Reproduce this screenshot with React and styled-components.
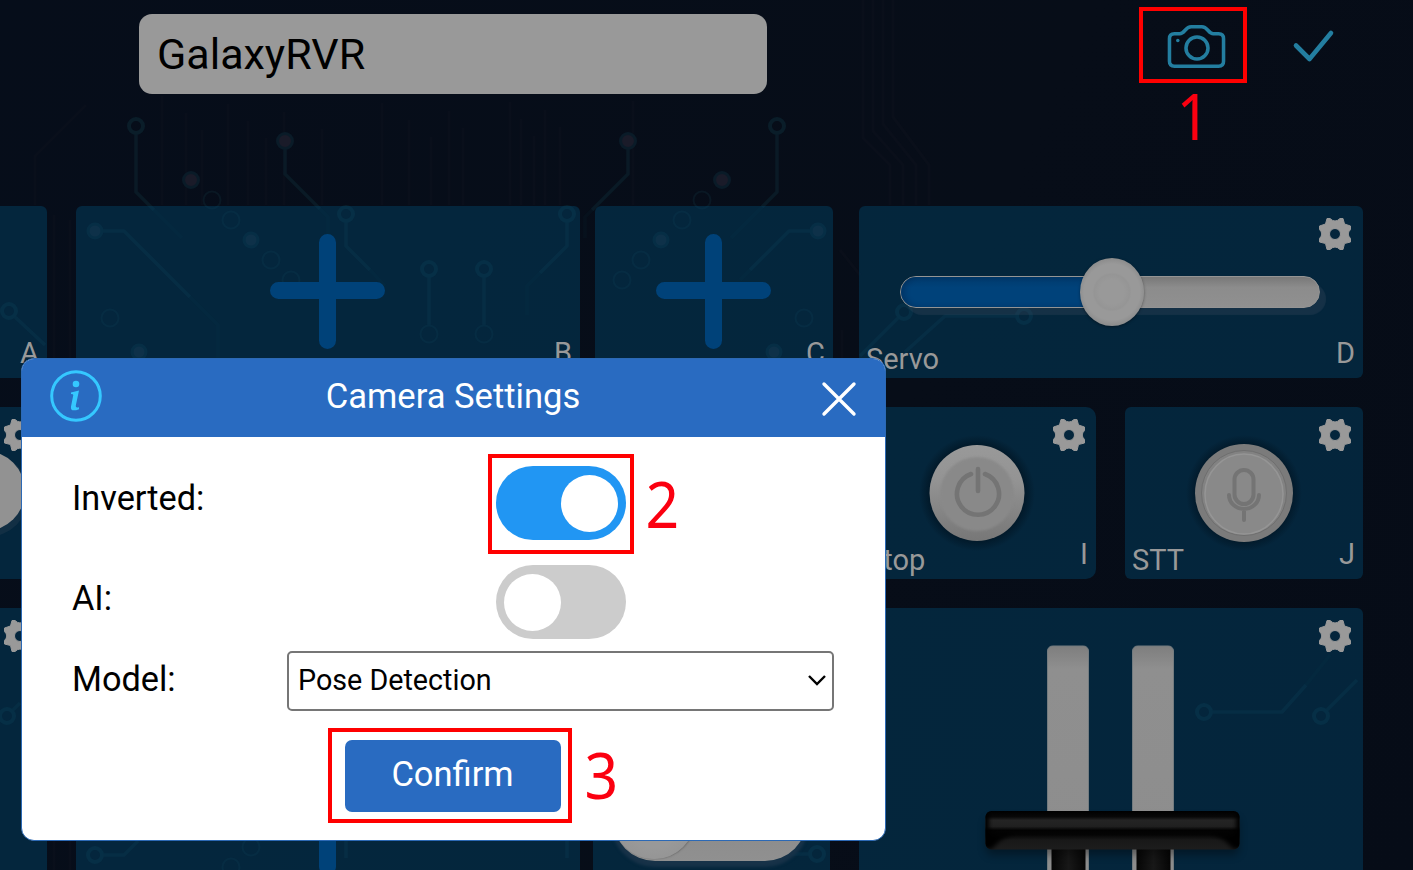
import React from 'react';
import styled, { createGlobalStyle } from 'styled-components';

const Global = createGlobalStyle`
  *{box-sizing:border-box}
  body{margin:0;background:#060c18;font-family:Roboto,"Liberation Sans",sans-serif;overflow:hidden}
`;
const Page = styled.div`
  position:relative;width:1413px;height:870px;overflow:hidden;
  background:linear-gradient(115deg,#060d1a 0%,#070d18 60%,#060c17 100%);
`;
const Circuit = styled.svg`position:absolute;inset:0;`;
const Content = styled.div`position:relative;display:flex;flex-direction:column;`;
const Header = styled.header`
  height:206px;padding:14px 78px 0 139px;display:flex;align-items:flex-start;
`;
const NameField = styled.div`
  width:628px;height:80px;border-radius:13px;background:#999;color:#000;
  padding-left:18px;font-size:43px;line-height:81px;
`;
const Actions = styled.div`margin-left:auto;padding-top:9px;display:flex;align-items:flex-start;gap:67px;`;
const Rows = styled.main`display:flex;flex-direction:column;gap:29px;`;
const Row = styled.div`display:flex;height:${p => p.$h || 172}px;`;
const Card = styled.section`
  position:relative;flex:none;width:${p => p.$w}px;margin-left:${p => p.$gap || 0}px;height:100%;
  border-radius:${p => p.$r || 6}px;background:rgba(3,71,108,.43);padding-right:1px;
  display:flex;align-items:center;justify-content:center;
`;
const Letter = styled.span`
  position:absolute;right:8px;bottom:8px;color:#999;font-size:29px;line-height:34px;
`;
const Caption = styled.span`
  position:absolute;left:7px;bottom:2px;color:#999;font-size:29px;line-height:34px;
`;
const GearSvg = styled.svg`position:absolute;right:${p => p.$right}px;top:10.5px;`;
const Art = styled.svg`display:block;overflow:visible;flex:none;`;
const PlusArt = styled(Art)`margin-bottom:2px;`;
const CheckArt = styled(Art)`margin-top:6px;`;
const Track = styled.div`
  position:relative;width:420px;height:32px;border-radius:16px;display:flex;align-items:center;margin:0 2px 1px 0;
  background:linear-gradient(#787878,#8c8c8c 35%,#909090);border:1.5px solid #949494;
  box-shadow:6px 7px 1px rgba(80,90,110,.22);
`;
const Fill = styled.div`
  width:196px;height:100%;border-radius:15px 0 0 15px;background:linear-gradient(#003a6c,#00427a 35%);
  box-shadow:inset 4px 0 5px rgba(0,20,50,.25);
`;
const Knob = styled.div`
  position:absolute;left:179px;width:64px;height:68px;border-radius:50%;
  background:radial-gradient(circle,#999 0 26%,#959595 38%,#999 42% 60%,#8c8c8c 72%);
  box-shadow:0 1px 3px rgba(0,0,0,.4);
`;
const ThrottleSlot = styled.div`align-self:flex-start;`;
const Disc = styled.div`
  position:absolute;right:22px;top:44px;width:80px;height:80px;border-radius:50%;background:#929292;box-shadow:2px 4px 0 2px #122f44;
`;
const Pill = styled.div`
  position:absolute;left:20px;top:169px;width:194px;height:84px;border-radius:42px;background:linear-gradient(#858585,#909090);
  box-shadow:0 4px 3px 2px #173248;
  &::after{content:"";display:block;width:82px;height:82px;border-radius:50%;background:radial-gradient(#999 50%,#909090);box-shadow:1px 0 2px #666}
`;

const Modal = styled.div`position:absolute;left:21px;top:358px;`;
const Dialog = styled.div`
  width:865px;height:483px;border:1px solid #2c69b5;border-radius:13px;background:#fff;overflow:hidden;
  display:flex;flex-direction:column;
`;
const DialogHeader = styled.div`
  height:78px;flex:none;background:#296bc1;color:#fff;display:flex;align-items:center;justify-content:space-between;
  padding:0 28px 3px 27px;
`;
const CloseSlot = styled.div`width:54px;padding-top:5px;display:flex;justify-content:flex-end;`;
const DialogTitle = styled.h1`
  margin:0 0 1px;font-weight:400;font-size:34.6px;line-height:42px;
`;
const Form = styled.div`display:grid;grid-template-columns:215px 547px;padding:29px 50px 0;`;
const Label = styled.label`
  height:${p => p.$h}px;font-size:34.3px;line-height:${p => p.$line}px;
`;
const Cell = styled.div`height:${p => p.$h}px;display:flex;align-items:flex-start;justify-content:center;`;
const Toggle = styled.div`
  width:130px;height:74px;border-radius:37px;background:${p => (p.$on ? '#2196f3' : '#ccc')};
  padding:0 8px;display:flex;align-items:center;justify-content:${p => (p.$on ? 'flex-end' : 'flex-start')};
  &::after{content:"";width:57px;height:57px;border-radius:50%;background:#fff}
`;
const Select = styled.div`
  width:547px;height:60px;border:2px solid #767676;border-radius:5px;padding:0 5px 2px 9px;
  display:flex;align-items:center;justify-content:space-between;font-size:28.7px;color:#000;
`;
const Confirm = styled.button`
  align-self:center;width:216px;height:72px;margin:0 2px 0 0;border:0;border-radius:7px;background:#296bc1;color:#fff;
  font:400 34.5px/68px Roboto,sans-serif;padding:0 0 4px;
`;
const Marker = styled.div`
  position:absolute;left:${p => p.$x}px;top:${p => p.$y}px;width:${p => p.$w}px;height:${p => p.$h}px;border:4px solid #f00;
`;
const Step = styled.span`
  position:absolute;left:${p => p.$x}px;top:${p => p.$y}px;color:#fb0010;
  font:400 64px/66px "Noto Sans","Open Sans",sans-serif;transform:scaleX(.92);
`;

const Gear = ({ right = 11 }) => (
  <GearSvg $right={right} width="34" height="34" viewBox="-17 -17 34 34">
    <path fill="#999" stroke="#999" strokeWidth="1" strokeLinejoin="round" fillRule="evenodd" d="M-8-15.500L-5-15.500Q0-10.500 5-15.500H8L9.500-10 15.500-8V-4.500Q11 0 15.500 4.500V8L9.500 9.500 8 15.500H5Q0 10.500-5 15.500H-8L-9.500 9.500-15.500 8V4.500Q-11 0-15.500-4.500V-8L-9.500-10ZM0-5.500A5.500 5.500 0 1 0 0 5.500A5.500 5.500 0 1 0 0-5.500Z" />
  </GearSvg>
);
const Plus = () => (
  <PlusArt width="115" height="115" viewBox="0 0 115 115" stroke="#004279" strokeWidth="17" strokeLinecap="round">
    <path d="M57.5 8.5V106.5M8.5 56.5H106.5" />
  </PlusArt>
);

const hollow = [[136,126],[777,126],[346,214],[567,214],[429,269],[484,269],[9,311],[904,312],[1024,316],[1204,712],[1321,716],[7,716],[95,855],[817,854]];
const faint = [[212,200],[231,220],[271,260],[291,280],[702,200],[682,220],[641,260],[622,280],[110,318],[804,318],[429,334],[484,334],[251,847],[231,867]];
const solid = [[285,141],[628,141],[191,180],[722,180]];
const dim = [[95,231],[818,231],[251,240],[661,240],[139,352],[774,352]];

const Background = () => (
  <Circuit width="1413" height="870" fill="none" strokeLinejoin="round">
    <g stroke="#10131f" strokeWidth="3" opacity=".35">
      {[162,186,202,228,248,266,284,322,382,409,431,449,463,510,521,534,545,560,633].map((x, i) => (
        <path key={x} d={`M${x} ${96 + (i * 17) % 43}V205`} />
      ))}
      {[0,1,2,3].map(i => <path key={i} d={`M${863 + i * 10} 0V${138 - i * 7}L${890 + i * 13} 165V205`} />)}
      <path d="M86 105L35 156V205M54 215V870M70 220V870M840 250L860 275M842 330V358" />
    </g>
    <g stroke="#0a1a26" strokeWidth="3.6">
      <path d="M136 134V192L154 210M285 149V174L320 209M777 134V192L762 207M628 149V174L592 210M346 222V246L370 270M567 222V246L540 273M103 231H124L190 297M810 231H789L750 270M429 277V325M484 277V325M15 317L45 345M898 318L860 356M1016 316H945L905 352M1212 712H1282L1306 685M1327 710L1357 680M13 710L20 703M103 855H124L138 841M809 854H790M346 838V858M567 838V858" />
      <g opacity=".35">
        <path d="M154 210L182 238M320 209L328 217V236M762 207L731 238M592 210L585 217V238M370 270L385 286M540 273L527 286V315M190 297L218 325V358M750 270L740 280M1306 685L1330 655" />
      </g>
      {hollow.map(([x, y]) => <circle key={`${x}-${y}`} cx={x} cy={y} r="7" stroke="#0a1d29" strokeWidth="4" />)}
    </g>
    <g stroke="#0a1824" strokeWidth="2">
      {faint.map(([x, y]) => <circle key={`${x}-${y}`} cx={x} cy={y} r="8.5" />)}
    </g>
    {solid.map(([x, y]) => <circle key={x} cx={x} cy={y} r="7.5" fill="#1a1b29" stroke="#0a1b28" strokeWidth="3" />)}
    {dim.map(([x, y]) => <circle key={x} cx={x} cy={y} r="7" fill="#18212f" stroke="#0a1b28" strokeWidth="3" />)}
  </Circuit>
);

const Camera = () => (
  <Art width="59" height="46" viewBox="0 0 60 46" fill="none" stroke="#237ea0" strokeWidth="3.6" strokeLinejoin="round">
    <path d="M7.5 10.5H13C18 10.5 18.500 3.500 24.500 3.500H35.500C41.500 3.500 42 10.500 47 10.500H52.500Q57.500 10.500 57.500 15.500V38.500Q57.500 43.500 52.500 43.500H7.500Q2.500 43.500 2.500 38.500V15.500Q2.500 10.500 7.500 10.500Z" />
    <circle cx="30.500" cy="25" r="11.200" />
    <circle cx="11" cy="17.500" r="1.800" fill="#237ea0" stroke="none" />
  </Art>
);
const Check = () => (
  <CheckArt width="42" height="34" viewBox="0 0 42 34" fill="none" stroke="#237ea0" strokeWidth="4.600" strokeLinecap="round" strokeLinejoin="round">
    <path d="M3 16.500L16.500 30 38 4" />
  </CheckArt>
);

const PowerButton = () => (
  <Art width="110" height="110" viewBox="-55 -55 110 110">
    <defs>
      <linearGradient id="rim" x2="0" y2="1"><stop stopColor="#999" /><stop offset=".35" stopColor="#949494" /><stop offset="1" stopColor="#777" /></linearGradient>
      <radialGradient id="halo"><stop offset=".8" stopColor="#00101c" stopOpacity=".65" /><stop offset="1" stopColor="#00101c" stopOpacity="0" /></radialGradient>
      <filter id="blend" x="-10%" y="-10%" width="120%" height="120%"><feGaussianBlur stdDeviation="1" /></filter>
    </defs>
    <circle r="58" fill="url(#halo)" />
    <ellipse rx="47.500" ry="48" fill="url(#rim)" />
    <circle r="37" cy="1" fill="#898989" filter="url(#blend)" />
    <path d="M-6-19A21 21 0 1 0 8-19M1-24V-2" fill="none" stroke="#747474" strokeWidth="4.600" strokeLinecap="round" />
  </Art>
);
const MicButton = () => (
  <Art width="110" height="110" viewBox="-55 -55 110 110">
    <circle r="58" fill="url(#halo)" />
    <circle r="49" fill="#7b7b7b" />
    <circle r="42.500" fill="#828282" stroke="#6f6f6f" strokeWidth="1" />
    <ellipse rx="39" ry="40" cy="1" fill="#898989" stroke="#959595" strokeWidth="1.600" />
    <g fill="none" stroke="#747474" strokeWidth="4" strokeLinecap="round">
      <rect x="-9.500" y="-23" width="19" height="34" rx="9.500" />
      <path d="M-15 2A15 14 0 0 0 15 2M0 16V27" />
    </g>
  </Art>
);
const Throttle = () => (
  <Art width="503" height="262" viewBox="859 608 503 262">
    <defs>
      <linearGradient id="slot" x2="0" y2="1"><stop stopColor="#7e7e7e" /><stop offset=".1" stopColor="#8f8f8f" /><stop offset="1" stopColor="#8d8d8d" /></linearGradient>
      <linearGradient id="bar" x2="0" y2="1"><stop stopColor="#000" /><stop offset=".15" stopColor="#080808" /><stop offset=".24" stopColor="#242424" /><stop offset=".4" stopColor="#202020" /><stop offset=".5" stopColor="#020202" /><stop offset=".62" stopColor="#050505" /><stop offset=".75" stopColor="#181818" /><stop offset="1" stopColor="#1d1d1d" /></linearGradient>
      <linearGradient id="stem"><stop stopColor="#050505" /><stop offset=".5" stopColor="#181818" /><stop offset="1" stopColor="#050505" /></linearGradient>
      <filter id="soft" x="-10%" y="-50%" width="120%" height="200%"><feGaussianBlur stdDeviation="4" /></filter>
      <filter id="shade" x="-5%" y="-20%" width="110%" height="140%"><feGaussianBlur stdDeviation="2.2" /></filter>
      <clipPath id="barShape"><rect x="985.500" y="811" width="254" height="38.500" rx="6" /></clipPath>
    </defs>
    {[1047.5, 1132.5].map(x => (
      <g key={x}>
        <rect x={x} y="646" width="41" height="230" rx="5" fill="url(#slot)" stroke="#737b7f" strokeWidth="1" />
        <rect x={x + 4} y="845" width="34" height="30" fill="url(#stem)" />
      </g>
    ))}
    <rect x="986" y="818" width="253" height="37" rx="6" fill="#000" opacity=".35" filter="url(#soft)" />
    <rect x="985.500" y="811" width="254" height="38.500" rx="6" fill="url(#bar)" />
    <g clipPath="url(#barShape)">
      <path d="M976 800H989V830Q989 836 1016 833Q1000 838 992 849H976ZM1249 800H1236V830Q1236 836 1209 833Q1225 838 1233 849H1249Z" fill="#020202" filter="url(#shade)" />
    </g>
  </Art>
);

export default function App() {
  return (
    <Page>
      <Global />
      <Background />
      <Content>
        <Header>
          <NameField>GalaxyRVR</NameField>
          <Actions>
            <Camera />
            <Check />
          </Actions>
        </Header>
        <Rows>
          <Row>
            <Card $w={237} $gap={-190}><Letter>A</Letter></Card>
            <Card $w={504} $gap={29}><Plus /><Letter>B</Letter></Card>
            <Card $w={238} $gap={15}><Plus /><Letter>C</Letter></Card>
            <Card $w={504} $gap={26}>
              <Track><Fill /><Knob /></Track>
              <Gear /><Caption>Servo</Caption><Letter>D</Letter>
            </Card>
          </Row>
          <Row>
            <Card $w={237} $gap={-190}><Disc /><Gear right={10} /></Card>
            <Card $w={237} $gap={812} $r={10}><PowerButton /><Gear right={10} /><Caption>Stop</Caption><Letter>I</Letter></Card>
            <Card $w={238} $gap={29}><MicButton /><Gear /><Caption>STT</Caption><Letter>J</Letter></Card>
          </Row>
          <Row $h={420}>
            <Card $w={237} $gap={-190}><Gear right={10} /></Card>
            <Card $w={504} $gap={29}><Plus /></Card>
            <Card $w={237} $gap={13}><Pill /></Card>
            <Card $w={504} $gap={29}><ThrottleSlot><Throttle /></ThrottleSlot><Gear /></Card>
          </Row>
        </Rows>
      </Content>
      <Modal>
        <Dialog>
          <DialogHeader>
            <Art width="54" height="54" viewBox="0 0 54 54">
              <circle cx="27" cy="26" r="24.300" fill="none" stroke="#35c8ff" strokeWidth="3" />
              <circle cx="27" cy="14" r="3.300" fill="#35c8ff" />
              <path d="M22 22.500Q26 21.500 30 20.500L26.800 35.500Q26.300 38.500 30 37.200V39.200Q21 42.500 22 36.500L24.300 25Q24.500 24 22 24Z" fill="#35c8ff" />
            </Art>
            <DialogTitle>Camera Settings</DialogTitle>
            <CloseSlot>
              <Art width="36" height="36" viewBox="0 0 36 36" stroke="#fff" strokeWidth="3.400" strokeLinecap="round"><path d="M3 3L33 33M33 3L3 33" /></Art>
            </CloseSlot>
          </DialogHeader>
          <Form>
            <Label $h={99} $line={64}>Inverted:</Label>
            <Cell $h={99}><Toggle $on /></Cell>
            <Label $h={86} $line={66}>AI:</Label>
            <Cell $h={86}><Toggle /></Cell>
            <Label $h={89} $line={56}>Model:</Label>
            <Cell $h={89}>
              <Select>Pose Detection
                <Art width="20" height="14" viewBox="0 0 20 14" fill="none" stroke="#000" strokeWidth="2.400"><path d="M2 3L10 11 18 3" /></Art>
              </Select>
            </Cell>
          </Form>
          <Confirm>Confirm</Confirm>
        </Dialog>
      </Modal>
      <Marker $x={1139} $y={7} $w={108} $h={76} />
      <Step $x={1175} $y={83}>1</Step>
      <Marker $x={488} $y={454} $w={146} $h={100} />
      <Step $x={644} $y={471}>2</Step>
      <Marker $x={328} $y={728} $w={244} $h={95} />
      <Step $x={583} $y={742}>3</Step>
    </Page>
  );
}
